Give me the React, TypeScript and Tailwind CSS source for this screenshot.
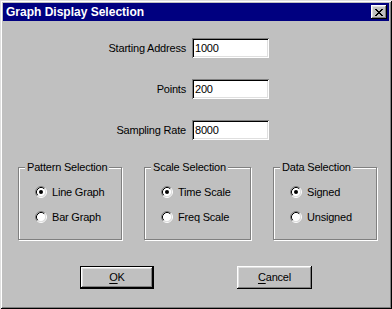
import React from "react";

const fields = [
  { label: "Starting Address", value: "1000" },
  { label: "Points", value: "200" },
  { label: "Sampling Rate", value: "8000" },
];

const groups = [
  { title: "Pattern Selection", options: ["Line Graph", "Bar Graph"], width: "w-[104px]" },
  { title: "Scale Selection", options: ["Time Scale", "Freq Scale"], width: "w-[107px]" },
  { title: "Data Selection", options: ["Signed", "Unsigned"], width: "w-[104px]" },
];

function Radio({ checked }: { checked: boolean }) {
  return (
    <svg width="12" height="12" viewBox="0 0 12 12" className="shrink-0">
      <circle cx="6" cy="6" r="4.5" fill="#fff" />
      <path d="M2.11 9.89 A5.5 5.5 0 0 1 9.89 2.11" fill="none" stroke="#808080" />
      <path d="M9.89 2.11 A5.5 5.5 0 0 1 2.11 9.89" fill="none" stroke="#fff" />
      <path d="M2.82 9.18 A4.5 4.5 0 0 1 9.18 2.82" fill="none" stroke="#000" />
      <path d="M9.18 2.82 A4.5 4.5 0 0 1 2.82 9.18" fill="none" stroke="#dfdfdf" />
      {checked && <circle cx="6" cy="6" r="2" fill="#000" />}
    </svg>
  );
}

function CloseGlyph() {
  const px = [
    [0, 0], [1, 0], [6, 0], [7, 0],
    [1, 1], [2, 1], [5, 1], [6, 1],
    [2, 2], [3, 2], [4, 2], [5, 2],
    [3, 3], [4, 3],
    [2, 4], [3, 4], [4, 4], [5, 4],
    [1, 5], [2, 5], [5, 5], [6, 5],
    [0, 6], [1, 6], [6, 6], [7, 6],
  ];
  return (
    <svg width="8" height="7" viewBox="0 0 8 7" shapeRendering="crispEdges">
      {px.map(([x, y], i) => (
        <rect key={i} x={x} y={y} width="1" height="1" fill="#000" />
      ))}
    </svg>
  );
}

export default function App() {
  return (
    <div className="w-[392px] h-[309px] bg-[#c0c0c0] p-[3px] flex flex-col text-black text-[11px] tracking-[-0.2px] font-['Liberation_Sans',Arial,sans-serif] shadow-[inset_1px_1px_0_#dfdfdf,inset_-1px_-1px_0_#000,inset_2px_2px_0_#fff,inset_-2px_-2px_0_#808080]">
      {/* title bar */}
      <div className="h-[18px] bg-[#000080] flex items-center justify-between pl-[3px] pr-[2px]">
        <span className="text-white font-bold text-[12px] tracking-normal leading-none">Graph Display Selection</span>
        <div className="w-[16px] h-[14px] bg-[#c0c0c0] flex items-center justify-center shadow-[inset_-1px_-1px_0_#000,inset_1px_1px_0_#fff,inset_-2px_-2px_0_#808080,inset_2px_2px_0_#dfdfdf]">
          <CloseGlyph />
        </div>
      </div>

      {/* fields */}
      <div className="flex flex-col gap-[21px] pt-[17px]">
        {fields.map((f) => (
          <div key={f.label} className="flex items-center h-[20px]">
            <span className="w-[189px] pr-[6px] text-right">{f.label}</span>
            <div className="w-[77px] h-[20px] bg-white pl-[3px] flex items-center shadow-[inset_1px_1px_0_#808080,inset_-1px_-1px_0_#fff,inset_2px_2px_0_#000,inset_-2px_-2px_0_#dfdfdf]">
              {f.value}
            </div>
          </div>
        ))}
      </div>

      {/* option groups */}
      <div className="flex gap-[22px] pl-[15px] mt-[20px]">
        {groups.map((g) => (
          <fieldset
            key={g.title}
            className={`${g.width} h-[80px] border border-[#808080] shadow-[1px_1px_0_#fff,inset_1px_1px_0_#fff]`}
          >
            <legend className="ml-[6px] px-[2px] leading-[14px] whitespace-nowrap bg-[#c0c0c0]">{g.title}</legend>
            <div className="flex flex-col gap-[9px] pl-[16px] pt-[10px]">
              {g.options.map((o, i) => (
                <label key={o} className="flex items-center gap-[5px] h-[16px]">
                  <Radio checked={i === 0} />
                  <span>{o}</span>
                </label>
              ))}
            </div>
          </fieldset>
        ))}
      </div>

      {/* buttons */}
      <div className="flex gap-[83px] pl-[77px] mt-[26px]">
        <button className="w-[74px] h-[23px] bg-[#c0c0c0] border border-black shadow-[inset_-1px_-1px_0_#000,inset_1px_1px_0_#fff,inset_-2px_-2px_0_#808080,inset_2px_2px_0_#dfdfdf] flex items-center justify-center">
          <span><u className="underline-offset-2">O</u>K</span>
        </button>
        <button className="w-[75px] h-[23px] bg-[#c0c0c0] shadow-[inset_-1px_-1px_0_#000,inset_1px_1px_0_#fff,inset_-2px_-2px_0_#808080,inset_2px_2px_0_#dfdfdf] flex items-center justify-center">
          <span><u className="underline-offset-2">C</u>ancel</span>
        </button>
      </div>
    </div>
  );
}
